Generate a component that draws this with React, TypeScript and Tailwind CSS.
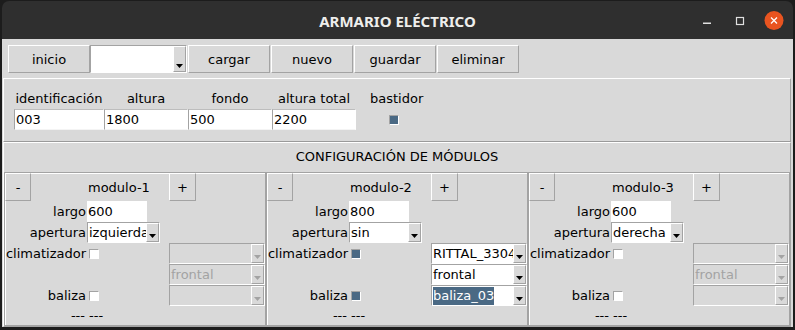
import React from 'react';

const Arrow = ({ disabled }: { disabled?: boolean }) => (
  <svg width="7" height="4" viewBox="0 0 7 4" className="block">
    <polygon points="0,0 7,0 3.5,4" fill={disabled ? '#a3a3a3' : '#000000'} />
  </svg>
);

function Btn({ children, className = '' }: { children?: React.ReactNode; className?: string }) {
  return (
    <div
      className={`flex items-center justify-center bg-[#d9d9d9] border border-t-white border-l-white border-b-[#a3a3a3] border-r-[#a3a3a3] ${className}`}
    >
      {children}
    </div>
  );
}

function Combo({
  value = '',
  className = '',
  disabled = false,
  selected = false,
}: {
  value?: string;
  className?: string;
  disabled?: boolean;
  selected?: boolean;
}) {
  return (
    <div
      className={`flex border border-t-[#a3a3a3] border-l-[#a3a3a3] border-b-white border-r-white ${
        disabled ? 'bg-[#d9d9d9]' : 'bg-white'
      } ${className}`}
    >
      <div className="flex-1 min-w-0 overflow-hidden whitespace-nowrap flex items-center pl-[1px]">
        {selected ? (
          <span className="bg-[#4a6984] text-white leading-[18px]">{value}</span>
        ) : (
          <span className={disabled ? 'text-[#a3a3a3]' : 'text-black'}>{value}</span>
        )}
      </div>
      <div className="w-[13px] shrink-0 bg-[#d9d9d9] border border-t-white border-l-white border-b-[#a3a3a3] border-r-[#a3a3a3] flex items-end justify-center pb-[3px]">
        <Arrow disabled={disabled} />
      </div>
    </div>
  );
}

function Check({ on }: { on: boolean }) {
  return (
    <div
      className={`w-[10px] h-[10px] border border-t-[#a3a3a3] border-l-[#a3a3a3] border-b-white border-r-white ${
        on ? 'bg-[#4a6984]' : 'bg-white'
      }`}
    />
  );
}

function Module({
  n,
  largo,
  apertura,
  on,
  clim,
  bal,
}: {
  n: number;
  largo: string;
  apertura: string;
  on: boolean;
  clim: string;
  bal: string;
}) {
  const dis = !on;
  return (
    <div className="w-[262px] h-[154px] border border-[#a3a3a3] shadow-[inset_1px_1px_0_#ffffff] grid grid-cols-[82px_82px_96px] grid-rows-[28px_21px_21px_21px_21px_21px_19px]">
      <div>
        <Btn className="w-[26px] h-[28px]">-</Btn>
      </div>
      <div className="flex items-center pl-[1px]">modulo-{n}</div>
      <div>
        <Btn className="w-[27px] h-[28px]">+</Btn>
      </div>

      <div className="flex items-center justify-end pr-[1px]">largo</div>
      <div className="flex items-center">
        <div className="w-[60px] h-[21px] bg-white flex items-center pl-[1px]">{largo}</div>
      </div>
      <div />

      <div className="flex items-center justify-end pr-[1px]">apertura</div>
      <div>
        <Combo value={apertura} className="w-[73px] h-[21px]" />
      </div>
      <div />

      <div className="flex items-center justify-end pr-[1px]">climatizador</div>
      <div className="flex items-center pl-[2px]">
        <Check on={on} />
      </div>
      <div>
        <Combo value={clim} disabled={dis} className="w-[96px] h-[21px]" />
      </div>

      <div />
      <div />
      <div>
        <Combo value="frontal" disabled={dis} className="w-[96px] h-[21px]" />
      </div>

      <div className="flex items-center justify-end pr-[1px]">baliza</div>
      <div className="flex items-center pl-[2px]">
        <Check on={on} />
      </div>
      <div>
        <Combo value={bal} disabled={dis} selected={on} className="w-[96px] h-[21px]" />
      </div>

      <div className="flex items-center justify-end pr-[2px]">---</div>
      <div className="flex items-center pl-[2px]">---</div>
      <div />
    </div>
  );
}

export default function App() {
  return (
    <div className="w-[795px] h-[330px] bg-[#1c1c1c] pt-[1px] pl-[2px] pr-[2px] pb-[3px] font-['DejaVu_Sans',sans-serif] text-[13px] leading-[15px] text-black">
      <div className="h-full flex flex-col rounded-t-[7px] overflow-hidden">
        {/* Title bar */}
        <div className="h-[38px] shrink-0 bg-[#2f2f2f] grid grid-cols-[1fr_auto_1fr] items-center">
          <div />
          <span className="font-['Noto_Sans',sans-serif] font-bold text-[15px] text-[#eeeeec] pt-[2px]">
            ARMARIO ELÉCTRICO
          </span>
          <div className="flex justify-end pr-[9px]">
            <svg width="90" height="38" viewBox="0 0 90 38" className="block">
              <rect x="9" y="21.5" width="8" height="1.5" fill="#e0e0e0" />
              <rect x="42.5" y="16.5" width="7" height="7" fill="none" stroke="#e0e0e0" strokeWidth="1.2" />
              <circle cx="80" cy="19.5" r="9.5" fill="#e95420" />
              <path d="M77 16.5 L83 22.5 M83 16.5 L77 22.5" stroke="#ffffff" strokeWidth="1.3" />
            </svg>
          </div>
        </div>

        {/* Body */}
        <div className="flex-1 bg-[#d9d9d9] flex flex-col">
          {/* Toolbar */}
          <div className="flex pt-[6px] pl-[6px]">
            <Btn className="w-[82px] h-[28px]">inicio</Btn>
            <Combo className="w-[97px] h-[28px]" />
            <Btn className="w-[82px] h-[28px] ml-[1px]">cargar</Btn>
            <Btn className="w-[82px] h-[28px] ml-[1px]">nuevo</Btn>
            <Btn className="w-[82px] h-[28px] ml-[1px]">guardar</Btn>
            <Btn className="w-[82px] h-[28px] ml-[1px]">eliminar</Btn>
          </div>

          {/* Parameters frame */}
          <div className="mt-[5px] ml-[1px] mr-[2px] h-[64px] border border-t-white border-l-white border-b-[#9a9a9a] border-r-[#a3a3a3] pt-[11px] pl-[10px]">
            <div className="grid grid-cols-[90px_84px_84px_84px_auto] grid-rows-[19px_21px]">
              <div className="flex justify-center pt-[1px]">identificación</div>
              <div className="flex justify-center pt-[1px]">altura</div>
              <div className="flex justify-center pt-[1px]">fondo</div>
              <div className="flex justify-center pt-[1px]">altura total</div>
              <div className="pl-[14px] pt-[1px]">bastidor</div>

              {['003', '1800', '500', '2200'].map((v) => (
                <div
                  key={v}
                  className="h-[21px] bg-white border border-t-[#bdbdbd] border-l-[#a3a3a3] border-b-[#f4f4f4] border-r-white flex items-center pl-[1px]"
                >
                  {v}
                </div>
              ))}
              <div className="flex items-center pl-[33px]">
                <Check on={true} />
              </div>
            </div>
          </div>

          {/* Modules configuration frame */}
          <div className="ml-[1px] mr-[2px] flex-1 border border-t-white border-l-white border-b-[#a3a3a3] border-r-[#a3a3a3] flex flex-col">
            <div className="h-[29px] flex items-center justify-center pb-[2px]">CONFIGURACIÓN DE MÓDULOS</div>
            <div className="flex">
              <Module n={1} largo="600" apertura="izquierda" on={false} clim="" bal="" />
              <Module n={2} largo="800" apertura="sin" on={true} clim="RITTAL_3304" bal="baliza_03" />
              <Module n={3} largo="600" apertura="derecha" on={false} clim="" bal="" />
            </div>
          </div>
        </div>
      </div>
    </div>
  );
}
